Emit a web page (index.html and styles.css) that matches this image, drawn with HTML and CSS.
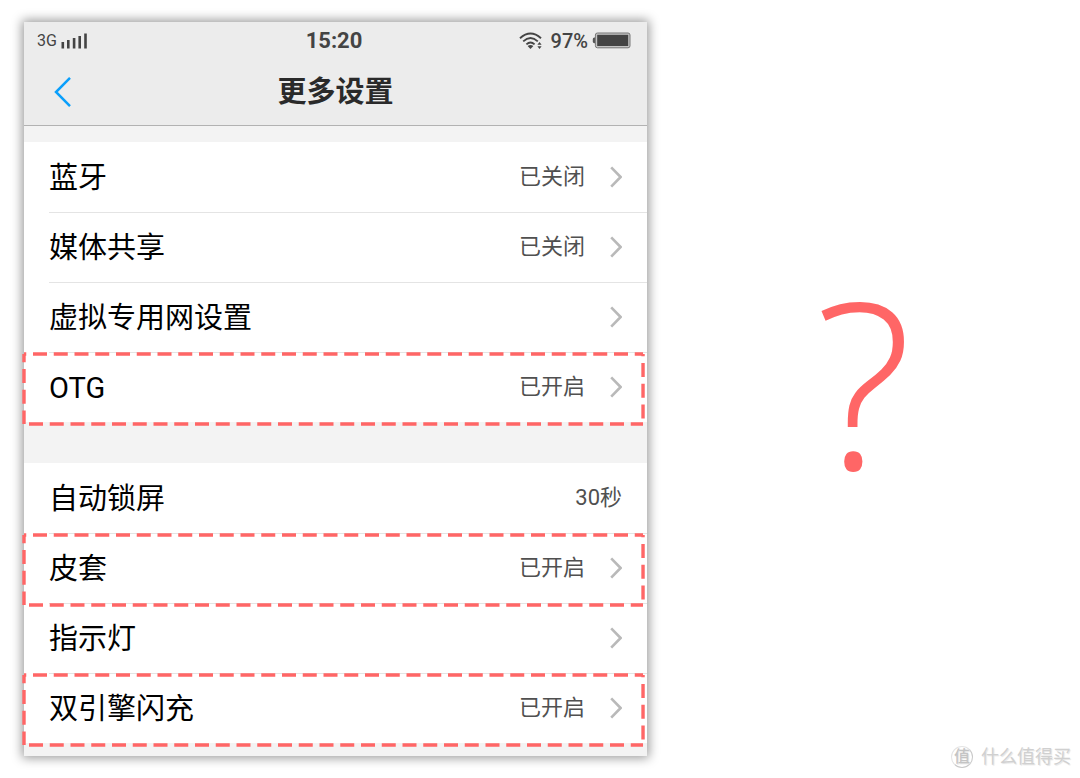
FILE: index.html
```
<!DOCTYPE html>
<html lang="zh-CN">

<head>
    <meta charset="UTF-8">
    <meta name="viewport" content="width=device-width, initial-scale=1">
    <title>更多设置</title>
    <link rel="stylesheet" href="styles.css">
</head>

<body>

    <svg class="defs" aria-hidden="true">
        <symbol id="chevron" viewBox="0 0 12 22">
            <path d="M1.2 1.4 L10.6 11 L1.2 20.6" fill="none" stroke="#b9b9b9" stroke-width="2.6" />
        </symbol>
    </svg>

    <main class="page">
        <section class="phone">
            <header>
                <div class="status">
                    <div class="signal">
                        <span>3G</span>
                        <svg width="27" height="16" viewBox="0 0 27 16" fill="#444">
                            <rect x="0.5" y="9" width="2.6" height="6.5" />
                            <rect x="6" y="7" width="2.6" height="8.5" />
                            <rect x="11.8" y="5" width="2.6" height="10.5" />
                            <rect x="17.4" y="3" width="2.6" height="12.5" />
                            <rect x="23.2" y="0.5" width="2.6" height="15" />
                        </svg>
                    </div>
                    <time>15:20</time>
                    <div class="power">
                        <svg width="24" height="18" viewBox="0 0 24 18" fill="none" stroke="#444" stroke-width="1.9">
                            <path d="M1 6.2 Q11.5 -3.2 22 6.2" />
                            <path d="M4.2 9.4 Q11.5 2.8 18.8 9.4" />
                            <path d="M7.4 12.4 Q11.5 8.8 15.6 12.4" />
                            <path d="M8.6 14 Q11.5 12 14.4 14 L11.5 17 Z" fill="#444" stroke="none" />
                            <path d="M18.4 12.8 L20.5 10 L22.6 12.8 Z M18.4 14.2 L20.5 17 L22.6 14.2 Z" fill="#444" stroke="none" />
                        </svg>
                        <span>97%</span>
                        <svg width="39" height="17" viewBox="0 0 39 17">
                            <path d="M3.4 5.4 H2.4 Q0.8 5.4 0.8 7 V9.6 Q0.8 11.2 2.4 11.2 H3.4 Z" fill="#555" />
                            <rect x="3.4" y="1" width="34.6" height="14.8" rx="2" fill="#c4c4c4" stroke="#777" stroke-width="1" />
                            <rect x="5.2" y="2.8" width="31" height="11.2" fill="#444" />
                        </svg>
                    </div>
                </div>
                <div class="title-bar">
                    <button class="back" aria-label="返回">
                        <svg width="18" height="32" viewBox="0 0 18 32">
                            <path d="M16 1.8 L2 16 L16 30.2" fill="none" stroke="#0a9ffb" stroke-width="2.5" />
                        </svg>
                    </button>
                    <h1>更多设置</h1>
                </div>
            </header>

            <ul class="group">
                <li>
                    <a href="#"><span class="name">蓝牙</span><span class="value">已关闭</span><svg class="arrow"><use href="#chevron" /></svg></a>
                </li>
                <li>
                    <a href="#"><span class="name">媒体共享</span><span class="value">已关闭</span><svg class="arrow"><use href="#chevron" /></svg></a>
                </li>
                <li>
                    <a href="#"><span class="name">虚拟专用网设置</span><svg class="arrow"><use href="#chevron" /></svg></a>
                </li>
                <li>
                    <a href="#"><span class="name">OTG</span><span class="value">已开启</span><svg class="arrow"><use href="#chevron" /></svg></a>
                    <svg class="mark">
                        <line class="top" x1="0" y1="0" x2="100%" y2="0" />
                        <line class="right" x1="100%" y1="0" x2="100%" y2="100%" />
                        <line class="bottom" x1="0" y1="100%" x2="100%" y2="100%" />
                        <line class="left" x1="0" y1="0" x2="0" y2="100%" />
                    </svg>
                </li>
            </ul>

            <ul class="group">
                <li>
                    <a href="#"><span class="name">自动锁屏</span><span class="value">30秒</span></a>
                </li>
                <li>
                    <a href="#"><span class="name">皮套</span><span class="value">已开启</span><svg class="arrow"><use href="#chevron" /></svg></a>
                    <svg class="mark">
                        <line class="top" x1="0" y1="0" x2="100%" y2="0" />
                        <line class="right" x1="100%" y1="0" x2="100%" y2="100%" />
                        <line class="bottom" x1="0" y1="100%" x2="100%" y2="100%" />
                        <line class="left" x1="0" y1="0" x2="0" y2="100%" />
                    </svg>
                </li>
                <li>
                    <a href="#"><span class="name">指示灯</span><svg class="arrow"><use href="#chevron" /></svg></a>
                </li>
                <li>
                    <a href="#"><span class="name">双引擎闪充</span><span class="value">已开启</span><svg class="arrow"><use href="#chevron" /></svg></a>
                    <svg class="mark">
                        <line class="top" x1="0" y1="0" x2="100%" y2="0" />
                        <line class="right" x1="100%" y1="0" x2="100%" y2="100%" />
                        <line class="bottom" x1="0" y1="100%" x2="100%" y2="100%" />
                        <line class="left" x1="0" y1="0" x2="0" y2="100%" />
                    </svg>
                </li>
            </ul>
        </section>

        <div class="question">?</div>
    </main>

    <div class="watermark">
        <span class="badge">值</span>
        <span>什么值得买</span>
    </div>

</body>

</html>
```
FILE: styles.css
```
body {
    margin: 0;
    background-color: white;
    font-family: Roboto, "Noto Sans CJK SC", sans-serif;
}

.defs {
    display: none;
}

.page {
    display: flex;
    padding: 22px 0 22px 24px;
}

/* Phone */
.phone {
    flex: 0 0 59%;
    box-sizing: border-box;
    padding-bottom: 13px;
    background-color: #f3f3f3;
    box-shadow: 0 0 10px 2px rgba(0, 0, 0, 0.4);
}

header {
    margin-bottom: 16px;
    background-color: #ececec;
    border-bottom: 1px solid #b2b2b2;
}

.status {
    display: grid;
    grid-template-columns: 1fr auto 1fr;
    align-items: center;
    height: 37px;
    padding: 0 16px 0 13px;
    color: #444;
}

.signal,
.power {
    display: flex;
    align-items: center;
}

.signal {
    gap: 4px;
    font-size: 16px;
}

.status time {
    font-size: 22px;
    font-weight: bold;
}

.power {
    justify-content: flex-end;
    font-size: 20px;
    font-weight: 500;
}

.power span {
    margin: 0 4px 0 8px;
}

.title-bar {
    display: grid;
    grid-template-columns: 1fr auto 1fr;
    align-items: center;
    height: 65px;
    padding-bottom: 1px;
}

.back {
    display: flex;
    justify-self: start;
    margin-left: 24px;
    padding: 6px;
    border: none;
    background: none;
    cursor: pointer;
}

h1 {
    margin: 0;
    color: #2a2a2a;
    font-size: 29px;
    font-weight: bold;
    line-height: 40px;
}

/* Settings list */
.group {
    margin: 0;
    padding: 0;
    list-style: none;
    background-color: white;
}

.group + .group {
    margin-top: 41px;
}

.group li {
    position: relative;
    padding-left: 25px;
}

.group a {
    display: flex;
    align-items: center;
    box-sizing: border-box;
    height: 70px;
    padding-right: 25px;
    color: black;
    text-decoration: none;
}

.group li + li a {
    padding-bottom: 1px;
    border-top: 1px solid #e4e4e4;
}

.name {
    flex: 1;
    padding-top: 2px;
    font-size: 29px;
    line-height: 40px;
}

.value {
    color: #505050;
    font-size: 22px;
    line-height: 32px;
}

.arrow {
    width: 12px;
    height: 22px;
    margin-left: 25px;
}

.mark {
    position: absolute;
    z-index: 1;
    top: 2px;
    left: 0;
    width: calc(100% - 4px);
    height: 70px;
    overflow: visible;
    pointer-events: none;
}

.mark line {
    stroke: #ff6666;
    stroke-width: 3.4;
    stroke-dasharray: 14 6.75;
}

.mark .top,
.mark .right {
    stroke-dashoffset: -9;
}

.mark .bottom {
    stroke-dashoffset: -5;
}

.mark .left {
    stroke-dashoffset: -15;
}

.question {
    flex: 1;
    align-self: center;
    padding-bottom: 16px;
    color: #ff6666;
    font-family: "Open Sans", sans-serif;
    font-size: 230px;
    font-weight: 300;
    line-height: 1;
    text-align: center;
}

.watermark {
    position: absolute;
    right: 9px;
    bottom: 8px;
    display: flex;
    align-items: center;
    gap: 8px;
    color: #d0d0d0;
    font-size: 18px;
    line-height: 26px;
    text-shadow: 1px 1px 1px #e4e4e4;
}

.badge {
    box-sizing: border-box;
    width: 22px;
    height: 22px;
    border: 1px solid #e4e4e4;
    border-right-color: #c8c8c8;
    border-bottom-color: #c8c8c8;
    border-radius: 50%;
    color: #c4c4c4;
    font-size: 16px;
    font-weight: 500;
    line-height: 20px;
    text-align: center;
}
```
